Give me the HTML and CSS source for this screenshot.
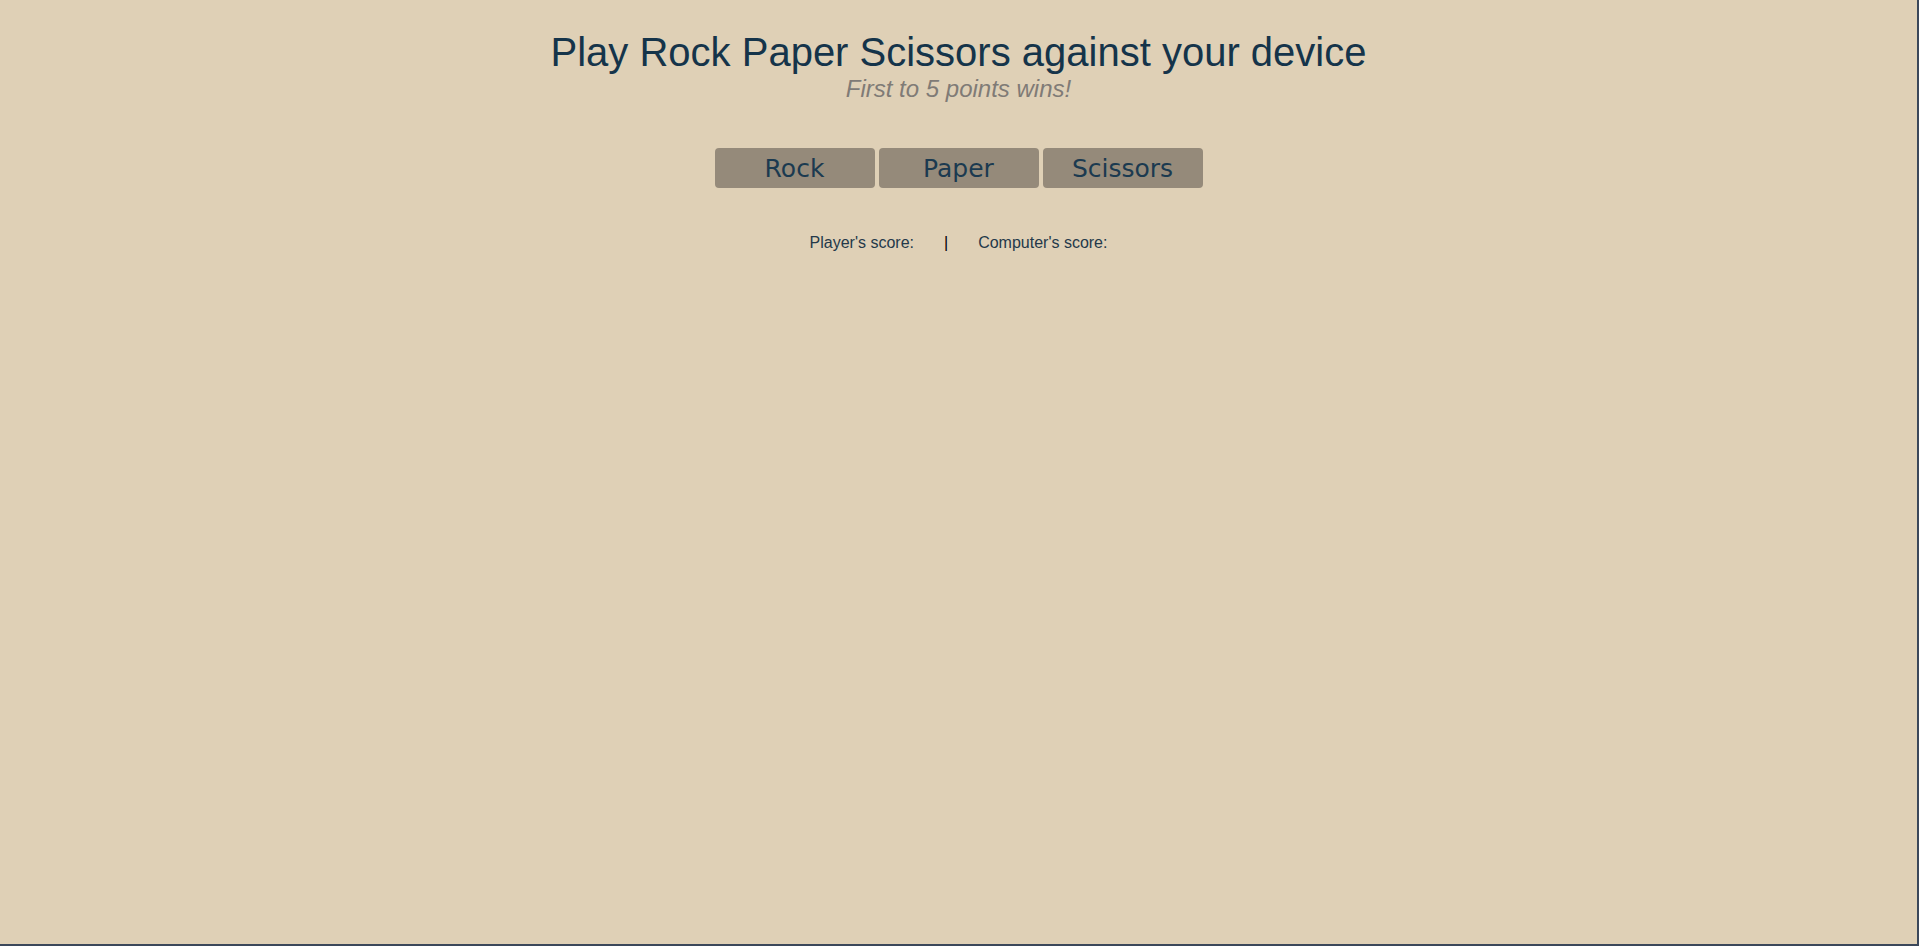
FILE: index.html
```html
<!DOCTYPE html>
<html lang="en">
<head>
<meta charset="utf-8">
<title>Rock Paper Scissors</title>
<link rel="stylesheet" href="styles.css">
</head>
<body>
<div class="page">
  <header class="header">
    <h1 class="title">Play Rock Paper Scissors against your device</h1>
    <p class="subtitle">First to 5 points wins!</p>
  </header>
  <div class="choices">
    <button class="choice">Rock</button>
    <button class="choice">Paper</button>
    <button class="choice">Scissors</button>
  </div>
  <div class="scores">
    <div class="score">Player's score: <span class="value"></span></div>
    <div class="divider">|</div>
    <div class="score">Computer's score: <span class="value"></span></div>
  </div>
</div>
</body>
</html>
```
FILE: styles.css
```css
html, body {
  margin: 0;
  padding: 0;
  background: #dfd0b6;
}
.page {
  box-sizing: border-box;
  min-height: 100vh;
  border-right: 2px solid #3b475a;
  border-bottom: 2px solid #3b475a;
  padding-top: 30px;
  font-family: "Liberation Sans", Arial, sans-serif;
}
.header {
  text-align: center;
}
.title {
  margin: 0;
  font-size: 40px;
  font-weight: normal;
  color: #15344a;
}
.subtitle {
  margin: 0;
  font-size: 24px;
  font-style: italic;
  color: #807b76;
}
.choices {
  display: flex;
  justify-content: center;
  gap: 4px;
  margin-top: 45px;
}
.choice {
  box-sizing: border-box;
  width: 160px;
  height: 40px;
  padding: 0;
  border: none;
  border-radius: 4px;
  background: #958a7a;
  color: #1b3a50;
  font-family: "DejaVu Sans", sans-serif;
  font-size: 25px;
  cursor: pointer;
}
.scores {
  display: flex;
  justify-content: center;
  gap: 30px;
  margin-top: 46px;
  font-size: 16px;
  color: #24394a;
}
.divider {
  color: #000;
}
```
